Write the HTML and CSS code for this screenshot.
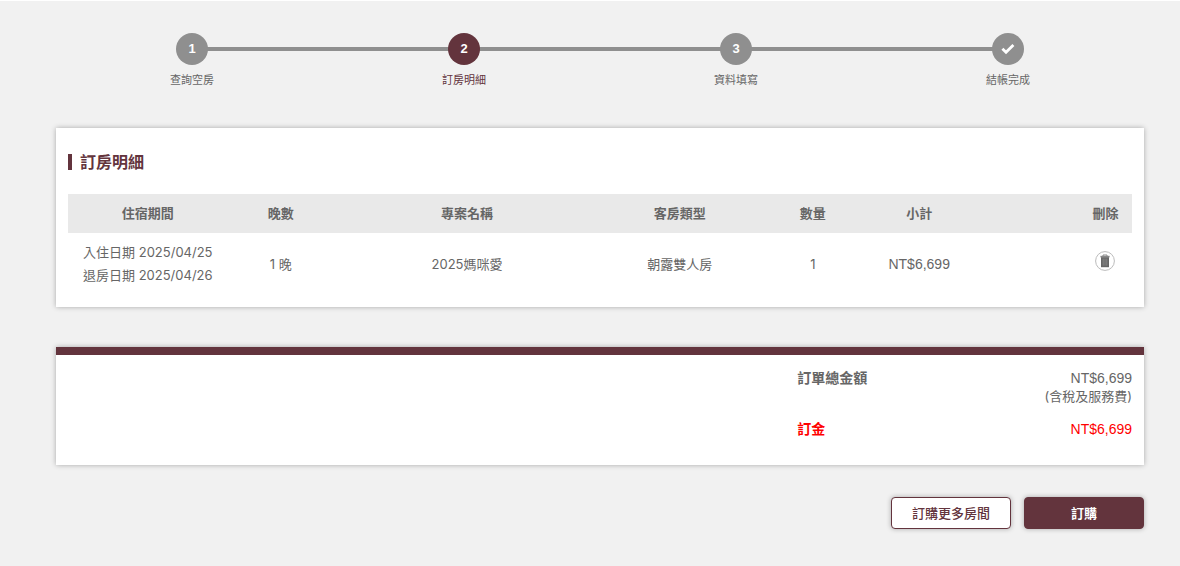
FILE: index.html
```html
<!DOCTYPE html>
<html lang="zh-Hant-TW">
<head>
  <meta charset="UTF-8">
  <meta name="viewport" content="width=device-width, initial-scale=1.0">
  <title>訂房明細</title>
  <link rel="stylesheet" href="styles.css">
</head>
<body>
  <main class="container">
    <ol class="steps">
      <li class="step">
        <span class="step-circle">1</span>
        <span class="step-label">查詢空房</span>
      </li>
      <li class="step active" aria-current="step">
        <span class="step-circle">2</span>
        <span class="step-label">訂房明細</span>
      </li>
      <li class="step">
        <span class="step-circle">3</span>
        <span class="step-label">資料填寫</span>
      </li>
      <li class="step">
        <span class="step-circle">
          <svg width="14" height="14" viewBox="0 0 14 14" aria-hidden="true">
            <path d="M1.4 6.8 L5 10.2 L12.4 2.9" fill="none" stroke="#fff" stroke-width="2.8"/>
          </svg>
        </span>
        <span class="step-label">結帳完成</span>
      </li>
    </ol>

    <section class="card">
      <h1 class="card-title">訂房明細</h1>
      <table class="order-table">
        <colgroup>
          <col class="col-date">
          <col class="col-small">
          <col class="col-plan">
          <col class="col-date">
          <col class="col-small">
          <col class="col-small">
          <col class="col-small">
          <col class="col-delete">
        </colgroup>
        <thead>
          <tr>
            <th>住宿期間</th>
            <th>晚數</th>
            <th>專案名稱</th>
            <th>客房類型</th>
            <th>數量</th>
            <th>小計</th>
            <td></td>
            <th>刪除</th>
          </tr>
        </thead>
        <tbody>
          <tr>
            <td>入住日期 2025/04/25<br>退房日期 2025/04/26</td>
            <td>1 晚</td>
            <td>2025媽咪愛</td>
            <td>朝露雙人房</td>
            <td>1</td>
            <td class="price">NT$6,699</td>
            <td></td>
            <td>
              <button type="button" class="delete-button" aria-label="刪除">
                <svg width="20" height="20" viewBox="0 0 20 20" aria-hidden="true">
                  <circle cx="10" cy="10" r="9.4" fill="#fff" stroke="#bbb"/>
                  <path d="M8 5V4h4v1" fill="none" stroke="#888"/>
                  <path d="M5.4 4.8h9.2v1.6H5.4z" fill="#888"/>
                  <path d="M6 6.2h8v10H6z" fill="#666"/>
                  <path d="M8.2 7.6v7M10 7.6v7M11.8 7.6v7" stroke="#999" stroke-width=".6"/>
                </svg>
              </button>
            </td>
          </tr>
        </tbody>
      </table>
    </section>

    <section class="card total-card">
      <dl class="total-list">
        <div class="total-row">
          <dt>訂單總金額</dt>
          <dd><span class="price">NT$6,699</span><br>(含稅及服務費)</dd>
        </div>
        <div class="total-row deposit">
          <dt>訂金</dt>
          <dd><span class="price">NT$6,699</span></dd>
        </div>
      </dl>
    </section>

    <div class="actions">
      <button type="button" class="btn">訂購更多房間</button>
      <button type="button" class="btn btn-primary">訂購</button>
    </div>
  </main>
</body>
</html>
```

FILE: styles.css
```css
* {
  box-sizing: border-box;
}

body {
  margin: 0;
  border-top: 1px solid #fff;
  background-color: #f1f1f1;
  color: #666;
  font-family: Inter, "Noto Sans CJK TC", sans-serif;
  font-size: 13px;
  line-height: 18px;
}

.container {
  max-width: 1200px;
  margin: 0 auto;
  padding: 32px 36px 36px 56px;
}

/* steps */
.steps {
  display: flex;
  margin: 0;
  padding: 0;
  list-style: none;
}

.step {
  flex: 1;
  display: flex;
  flex-direction: column;
  align-items: center;
  gap: 7px;
  position: relative;
}

.step + .step::before {
  content: "";
  position: absolute;
  top: 14px;
  right: 50%;
  width: 100%;
  height: 4px;
  background-color: #8f8f8f;
}

.step-circle {
  display: flex;
  align-items: center;
  justify-content: center;
  width: 32px;
  height: 32px;
  border-radius: 50%;
  background-color: #8f8f8f;
  color: #fff;
  font-family: "Liberation Sans", Arial, sans-serif;
  font-weight: bold;
  position: relative;
  z-index: 2;
}

.step-label {
  font-size: 11px;
  line-height: 16px;
}

.step.active .step-circle {
  background-color: #63343d;
}

.step.active .step-label {
  color: #63343d;
}

/* cards */
.card {
  margin-top: 40px;
  padding: 23px 12px 12px;
  background-color: #fff;
  box-shadow: 0 0 5px rgba(0, 0, 0, 0.3);
}

.card-title {
  display: flex;
  align-items: center;
  gap: 8px;
  margin: 0 0 21px;
  color: #63343d;
  font-size: 16px;
  line-height: 22px;
}

.card-title::before {
  content: "";
  width: 4px;
  height: 16px;
  background-color: #63343d;
}

.order-table {
  width: 100%;
  table-layout: fixed;
  border-collapse: collapse;
  text-align: center;
  line-height: 23px;
}

.order-table th,
.order-table td {
  padding: 8px 0;
}

.order-table thead {
  background-color: #e9e9e9;
}

.col-date {
  width: 15%;
}

.col-small {
  width: 10%;
}

.col-plan {
  width: 25%;
}

.col-delete {
  width: 5%;
}

.price {
  font-family: "Liberation Sans", Arial, sans-serif;
  font-size: 14px;
}

.delete-button {
  padding: 0;
  border: none;
  background: none;
  cursor: pointer;
}

/* total */
.total-card {
  border-top: 8px solid #63343d;
  padding: 14px 12px 27px;
}

.total-list {
  display: flex;
  flex-direction: column;
  gap: 15px;
  width: calc(100% / 3 - 20px);
  margin: 0 0 0 auto;
}

.total-row {
  display: flex;
  justify-content: space-between;
}

.total-row dt {
  font-size: 14px;
  font-weight: bold;
}

.total-row dd {
  margin: 0;
  text-align: right;
}

.deposit {
  color: #f00;
}

/* buttons */
.actions {
  display: flex;
  justify-content: flex-end;
  gap: 13px;
  margin-top: 32px;
}

.btn {
  width: 120px;
  height: 32px;
  padding: 0 0 2px;
  border: 1px solid #63343d;
  border-radius: 4px;
  background-color: #fff;
  color: #63343d;
  box-shadow: 0 0 5px rgba(0, 0, 0, 0.3);
  font-family: inherit;
  font-size: 13px;
  font-weight: 500;
  cursor: pointer;
}

.btn-primary {
  background-color: #63343d;
  color: #fff;
  font-weight: bold;
}
```
